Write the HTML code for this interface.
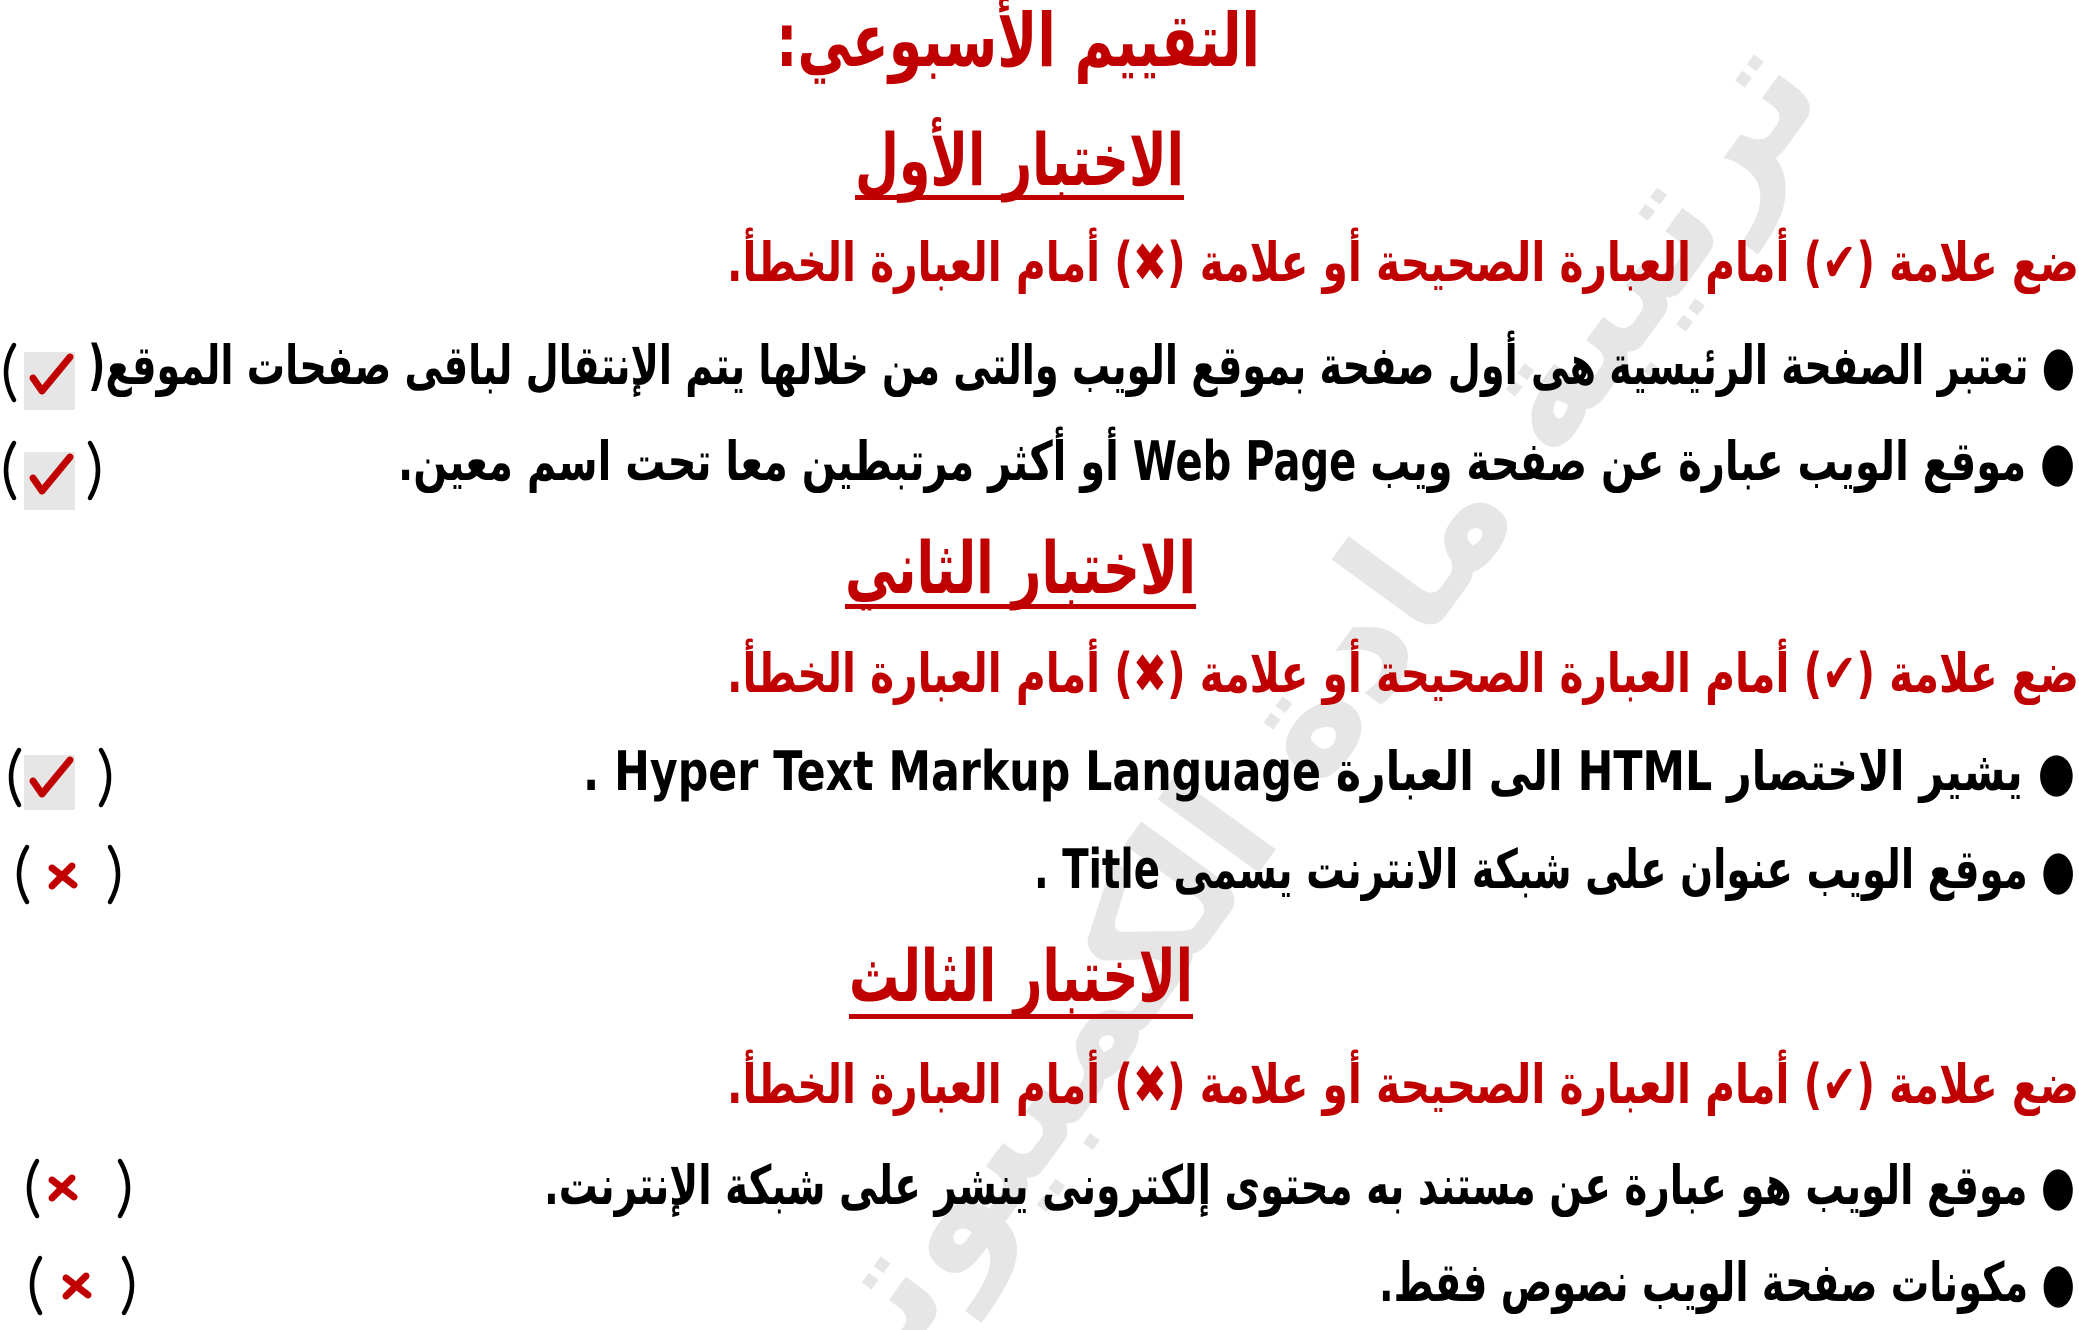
<!DOCTYPE html>
<html><head><meta charset="utf-8">
<style>
html,body{margin:0;padding:0;background:#fff;}
html{width:2079px;height:1330px;overflow:hidden;}
body{width:2079px;height:1330px;position:relative;overflow:hidden;font-family:"DejaVu Sans","Liberation Sans",sans-serif;font-weight:bold;}
.t{position:absolute;white-space:nowrap;direction:rtl;line-height:1;}
.red{color:#c00000;}
.blk{color:#000;}
.ul{position:absolute;height:5px;background:#c00000;}
.wm{position:absolute;color:#e6e6e6;font-size:165px;white-space:nowrap;direction:rtl;font-weight:bold;}
</style></head><body>
<div class="wm" style="left:470px;top:630px;transform:rotate(-54deg);transform-origin:center;">ترتيبة مادة الكمبيوتر</div>

<div class="t red fit" data-x="776" data-w="484" style="top:4px;font-size:74px;">التقييم الأسبوعي:</div>

<div class="t red fit" data-x="855" data-w="329" style="top:124px;font-size:72px;">الاختبار الأول</div>
<div class="ul" style="left:855px;top:195px;width:329px;"></div>
<div class="t red fit" data-x="727" data-w="1352" style="top:236px;font-size:54px;">ضع علامة (✔) أمام العبارة الصحيحة أو علامة (✖) أمام العبارة الخطأ.</div>
<div class="t blk fit" data-x="88" data-w="1987" style="top:339px;font-size:54px;">● تعتبر الصفحة الرئيسية هى أول صفحة بموقع الويب والتى من خلالها يتم الإنتقال لباقى صفحات الموقع(</div>
<div class="t blk fit" data-x="398" data-w="1677" style="top:435px;font-size:54px;">● موقع الويب عبارة عن صفحة ويب Web Page أو أكثر مرتبطين معا تحت اسم معين.</div>

<div class="t red fit" data-x="845" data-w="351" style="top:532px;font-size:72px;">الاختبار الثاني</div>
<div class="ul" style="left:845px;top:604px;width:351px;"></div>
<div class="t red fit" data-x="727" data-w="1352" style="top:647px;font-size:54px;">ضع علامة (✔) أمام العبارة الصحيحة أو علامة (✖) أمام العبارة الخطأ.</div>
<div class="t blk fit" data-x="583" data-w="1492" style="top:745px;font-size:54px;">● يشير الاختصار HTML الى العبارة Hyper Text Markup Language .</div>
<div class="t blk fit" data-x="1034" data-w="1041" style="top:843px;font-size:54px;">● موقع الويب عنوان على شبكة الانترنت يسمى Title .</div>

<div class="t red fit" data-x="849" data-w="344" style="top:940px;font-size:72px;">الاختبار الثالث</div>
<div class="ul" style="left:849px;top:1014px;width:344px;"></div>
<div class="t red fit" data-x="727" data-w="1352" style="top:1058px;font-size:54px;">ضع علامة (✔) أمام العبارة الصحيحة أو علامة (✖) أمام العبارة الخطأ.</div>
<div class="t blk fit" data-x="544" data-w="1531" style="top:1159px;font-size:54px;">● موقع الويب هو عبارة عن مستند به محتوى إلكترونى ينشر على شبكة الإنترنت.</div>
<div class="t blk fit" data-x="1379" data-w="696" style="top:1256px;font-size:54px;">● مكونات صفحة الويب نصوص فقط.</div>

<svg style="position:absolute;left:0;top:0" width="160" height="1330">
 <g fill="#e6e6e6"><rect x="24" y="352" width="51" height="58"/><rect x="24" y="452" width="51" height="58"/><rect x="24" y="755" width="51" height="55"/></g>
 <g fill="none" stroke="#c00000" stroke-width="7" stroke-linecap="round" stroke-linejoin="round">
  <path d="M33 378 L42 391 L70 357"/>
  <path d="M33 478 L42 491 L70 457"/>
  <path d="M33 781 L42 794 L70 760"/>
 </g>
 <g stroke="#c00000" stroke-width="7" stroke-linecap="round">
  <path d="M52 868 L74 885 M72 866 L52 886"/>
  <path d="M52 1180 L74 1197 M72 1178 L52 1198"/>
  <path d="M66 1278 L88 1295 M86 1276 L66 1296"/>
 </g>
 <g fill="none" stroke="#000" stroke-width="4.5" stroke-linecap="round">
  <path d="M14 345 Q-2 372 14 400"/>
  <path d="M14 443 Q-2 470 14 498"/><path d="M90 443 Q106 470 90 498"/>
  <path d="M19 750 Q3 777 19 805"/><path d="M101 750 Q117 777 101 805"/>
  <path d="M27 847 Q11 874 27 902"/><path d="M110 847 Q126 874 110 902"/>
  <path d="M37 1161 Q21 1188 37 1216"/><path d="M120 1161 Q136 1188 120 1216"/>
  <path d="M40 1258 Q24 1285 40 1313"/><path d="M124 1258 Q140 1285 124 1313"/>
 </g>
</svg>

<script>
document.querySelectorAll('.fit').forEach(function(e){
  var x=+e.dataset.x,w=+e.dataset.w;
  e.style.left=x+'px';
  var r=e.getBoundingClientRect();
  var s=w/r.width;
  e.style.transformOrigin='0 0';
  e.style.transform='scaleX('+s+')';
});
</script>
</body></html>
